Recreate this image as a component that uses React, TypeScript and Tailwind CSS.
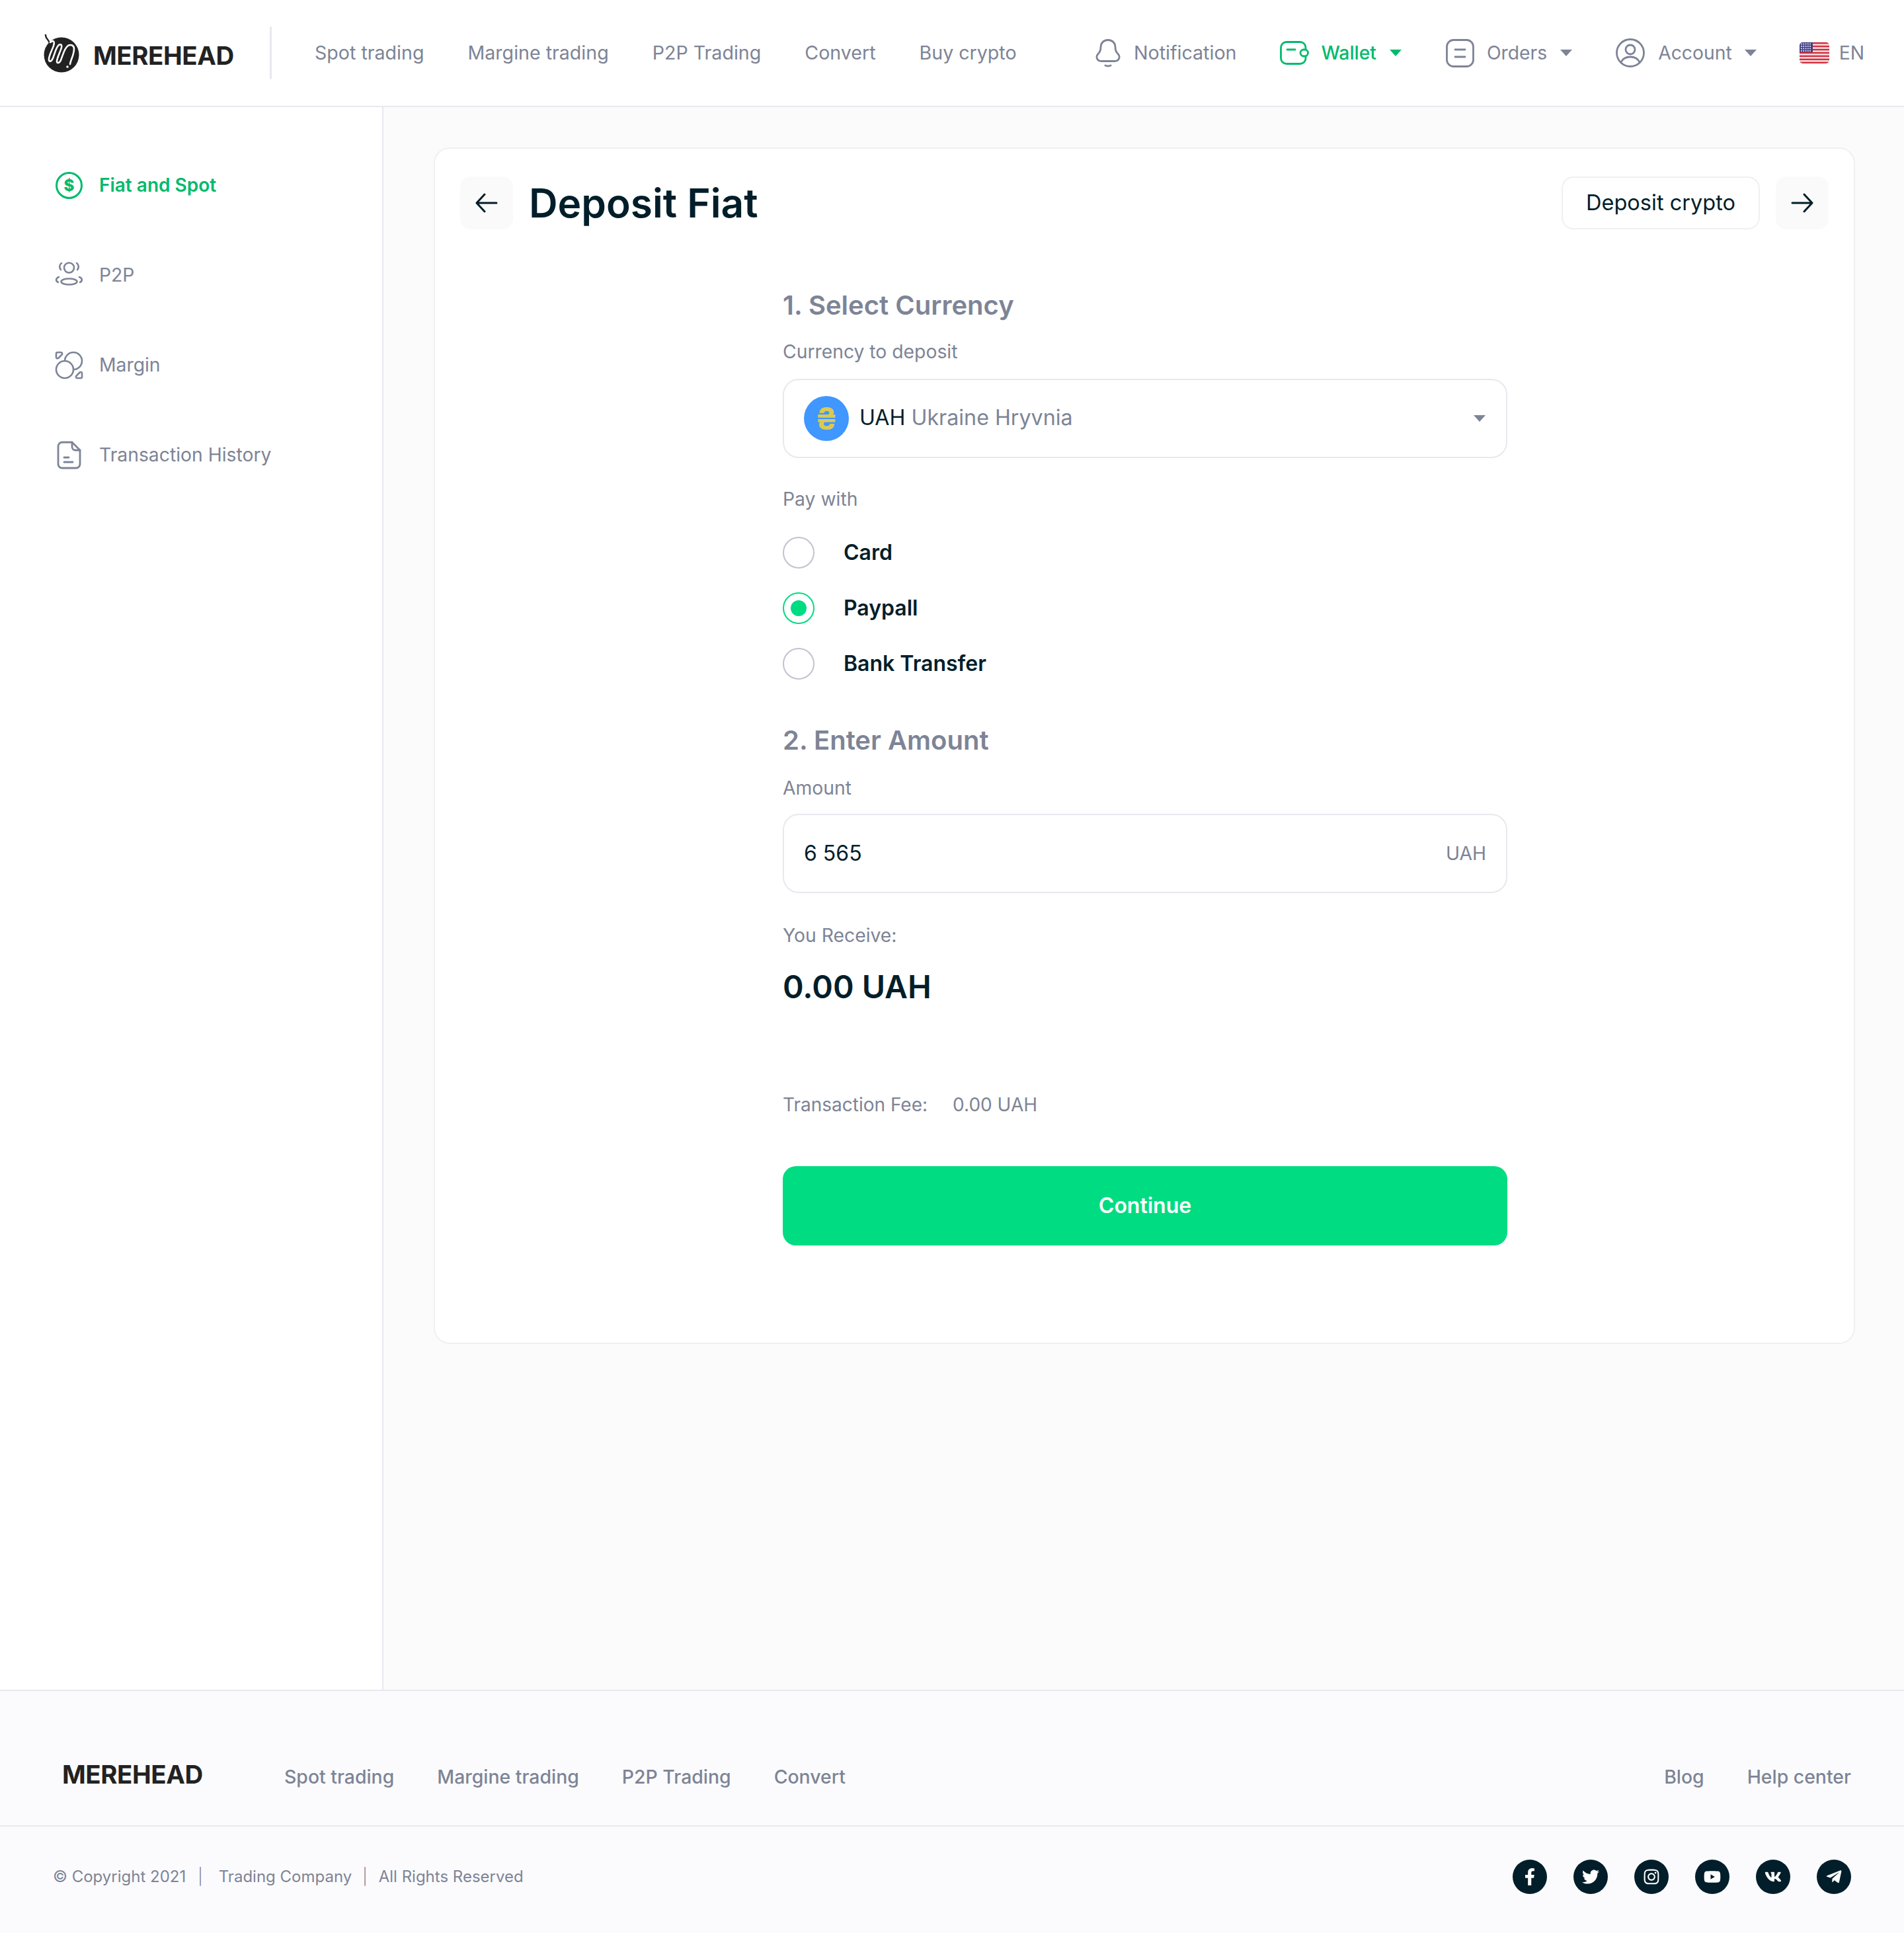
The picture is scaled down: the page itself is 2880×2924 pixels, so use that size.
import { FaFacebookF, FaTwitter, FaInstagram, FaYoutube, FaVk, FaTelegramPlane } from "react-icons/fa";

const topLinks = ["Spot trading", "Margine trading", "P2P Trading", "Convert", "Buy crypto"];
const footerLinks = ["Spot trading", "Margine trading", "P2P Trading", "Convert"];
const socials = [FaFacebookF, FaTwitter, FaInstagram, FaYoutube, FaVk, FaTelegramPlane];
const flagStripes = [0, 2, 4, 6, 8, 10, 12];

function Caret({ className }: { className: string }) {
  return (
    <svg width="20" height="12" viewBox="0 0 20 12" className={className}>
      <path d="M1 1h18L10 11z" fill="currentColor" />
    </svg>
  );
}

function Logo() {
  return (
    <svg width="54" height="58" viewBox="0 0 54 58" fill="none">
      <circle cx="27" cy="31" r="26.500" fill="#222" />
      <path d="M3 0c-1 6 5 8 6 13" stroke="#222" strokeWidth="2.4" strokeLinecap="round" />
      <path
        d="M10 12c5-4 7-1 5 5-2 7-8 16-7 22 1 3 4 2 6-3 3-7 4-14 8-19 3-3 6-2 5 3-2 7-7 16-7 21 0 3 4 3 6-2 3-7 5-18 11-22 4-2 9-1 9 5 0 9-5 16-6 23"
        stroke="#fff"
        strokeWidth="2.6"
        strokeLinecap="round"
        strokeLinejoin="round"
      />
      <circle cx="36" cy="49" r="1.800" fill="#fff" />
    </svg>
  );
}

function Flag() {
  return (
    <svg width="45" height="32" viewBox="0 0 45 32" className="rounded-[5px]">
      <rect width="45" height="32" fill="#f7e4e6" />
      {flagStripes.map((n) => (
        <rect key={n} y={(n * 32) / 13} width="45" height="2.460" fill="#d22f3f" />
      ))}
      <rect width="20" height="15" fill="#3f3f86" />
      <path d="M2 2.500h16M2 6h16M2 9.500h16M2 13h16" stroke="#dcdcf0" strokeWidth="1.800" strokeDasharray="1.800 1.500" />
    </svg>
  );
}

export default function App() {
  return (
    <div className="flex min-h-[2924px] w-[2880px] flex-col bg-white font-['Inter',sans-serif] text-[#7d8496]">
      <header className="flex h-[162px] items-center border-b-2 border-[#e8e8ee] pl-[66px] pr-[60px] text-[28.3px]">
        <div className="flex w-[342px] shrink-0 items-center gap-[21px]">
          <div className="mt-[1px] flex">
            <Logo />
          </div>
          <span className="mt-[8px] text-[38.4px] font-bold leading-none tracking-[-0.4px] text-[#222]">MEREHEAD</span>
        </div>
        <div className="h-[80px] w-[3px] rounded bg-[#e8e8ee]" />
        <nav className="ml-[65px] flex gap-[66px] text-[28.6px]">
          {topLinks.map((l) => (
            <span key={l}>{l}</span>
          ))}
        </nav>
        <div className="ml-auto flex items-center">
          <svg width="38" height="43" viewBox="0 0 38 43" fill="none" stroke="currentColor" strokeWidth="2.800" strokeLinecap="round">
            <path d="M19 1.500c-7 0-11 5-11 11 0 4-1 7-4 10-4 4-2 11 5 11h20c7 0 9-7 5-11-3-3-4-6-4-10 0-6-4-11-11-11z" />
            <path d="M15 40c3 1.500 5 1.500 8 0" />
          </svg>
          <span className="ml-[20px] text-[28.6px]">Notification</span>
          <div className="ml-[66px] flex items-center text-[#00ba6c]">
            <svg width="44" height="36" viewBox="0 0 44 36" fill="none" stroke="currentColor" strokeWidth="2.800" strokeLinecap="round">
              <path d="M39 12V10a8.500 8.500 0 0 0-8.500-8.500H10A8.500 8.500 0 0 0 1.500 10v16a8.500 8.500 0 0 0 8.500 8.500h20.500A8.500 8.500 0 0 0 39 26v-2" />
              <path d="M11 13h12" />
              <rect x="31" y="13" width="11.500" height="10" rx="5" />
            </svg>
            <span className="ml-[18px] font-medium">Wallet</span>
            <Caret className="ml-[19px]" />
          </div>
          <svg className="ml-[66px]" width="43" height="43" viewBox="0 0 43 43" fill="none" stroke="currentColor" strokeWidth="2.800" strokeLinecap="round">
            <rect x="1.500" y="1.500" width="40" height="40" rx="10" />
            <path d="M14 16h15M14 27h15" />
          </svg>
          <span className="ml-[19px]">Orders</span>
          <Caret className="ml-[19px]" />
          <svg className="ml-[65px]" width="44" height="44" viewBox="0 0 44 44" fill="none" stroke="currentColor" strokeWidth="2.800">
            <circle cx="22" cy="22" r="20.500" />
            <circle cx="22" cy="17" r="7" />
            <path d="M8 36c3-6 8-8 14-8s11 2 14 8" />
          </svg>
          <span className="ml-[20px]">Account</span>
          <Caret className="ml-[18px]" />
          <div className="ml-[64px] flex">
            <Flag />
          </div>
          <span className="ml-[15px]">EN</span>
        </div>
      </header>

      <div className="flex flex-1">
        <aside className="flex w-[580px] shrink-0 flex-col gap-[92px] border-r-2 border-[#e8e8ee] pl-[83px] pt-[96px] text-[28.3px]">
          <div className="flex h-[44px] items-center gap-[24px] text-[28px] font-semibold text-[#00ba6c]">
            <svg width="43" height="43" viewBox="0 0 43 43" fill="none">
              <circle cx="21.500" cy="21.500" r="19" stroke="currentColor" strokeWidth="3" />
              <text x="21.500" y="30" textAnchor="middle" fontSize="24" fontWeight="800" fill="currentColor">$</text>
            </svg>
            <span>Fiat and Spot</span>
          </div>
          <div className="flex h-[44px] items-center gap-[24px]">
            <svg width="43" height="43" viewBox="0 0 43 43" fill="none" stroke="currentColor" strokeWidth="2.600" strokeLinecap="round">
              <circle cx="21.500" cy="10" r="7.500" />
              <ellipse cx="21.500" cy="31" rx="12" ry="4.500" />
              <path d="M10 3c-3 2-4 7-1 10M33 3c3 2 4 7 1 10M6 24c-5 2-5 6-1 8M37 24c5 2 5 6 1 8" />
            </svg>
            <span>P2P</span>
          </div>
          <div className="flex h-[44px] items-center gap-[24px]">
            <svg width="43" height="43" viewBox="0 0 43 43" fill="none" stroke="currentColor" strokeWidth="2.600" strokeLinejoin="round">
              <circle cx="28" cy="15" r="13" />
              <circle cx="15" cy="28" r="13" fill="#fff" />
              <path d="M2 4a2 2 0 0 1 2-2h5a2 2 0 0 1 1.500 3.500L5 11a2 2 0 0 1-3-1.500zM41 39a2 2 0 0 1-2 2h-5a2 2 0 0 1-1.500-3.500L38 32a2 2 0 0 1 3 1.500z" />
            </svg>
            <span>Margin</span>
          </div>
          <div className="flex h-[44px] items-center gap-[24px]">
            <svg width="43" height="43" viewBox="0 0 43 43" fill="none" stroke="currentColor" strokeWidth="2.800" strokeLinecap="round" strokeLinejoin="round">
              <path d="M26 2H11a6 6 0 0 0-6 6v27a6 6 0 0 0 6 6h21a6 6 0 0 0 6-6V14z" />
              <path d="M26 2v7a5 5 0 0 0 5 5h7M14 25h7M14 32h13" />
            </svg>
            <span>Transaction History</span>
          </div>
        </aside>

        <main className="flex-1 bg-[#fbfbfb] pl-[76px] pr-[74px] pt-[61px]">
          <section className="h-[1810px] rounded-[24px] border-2 border-[#f0f0f2] bg-white">
            <div className="flex items-center justify-between pl-[38px] pr-[38px] pt-[42px]">
              <div className="flex items-center gap-[24px]">
                <div className="flex h-[80px] w-[80px] items-center justify-center rounded-[16px] bg-[#fafafa]">
                  <svg width="36" height="30" viewBox="0 0 36 30" fill="none" stroke="#021e2a" strokeWidth="3" strokeLinecap="round" strokeLinejoin="round">
                    <path d="M33 15H3M15 2 3 15l12 13" />
                  </svg>
                </div>
                <h1 className="text-[60.4px] font-semibold leading-none text-[#021e2a]">Deposit Fiat</h1>
              </div>
              <div className="flex items-center gap-[24px]">
                <div className="flex h-[80px] w-[300px] items-center justify-center rounded-[18px] border-2 border-[#f0f0f2] text-[32.5px] text-[#021e2a]">
                  Deposit crypto
                </div>
                <div className="flex h-[80px] w-[80px] items-center justify-center rounded-[16px] bg-[#fafafa]">
                  <svg width="36" height="30" viewBox="0 0 36 30" fill="none" stroke="#021e2a" strokeWidth="3" strokeLinecap="round" strokeLinejoin="round">
                    <path d="M3 15h30M21 2l12 13-12 13" />
                  </svg>
                </div>
              </div>
            </div>

            <div className="ml-[526px] mt-[91px] w-[1096px]">
              <h2 className="text-[40px] font-semibold leading-[48px] text-[#7d8496]">1. Select Currency</h2>
              <div className="mt-[28px] text-[28.3px] leading-[36px]">Currency to deposit</div>
              <div className="mt-[23px] flex h-[120px] items-center rounded-[24px] border-2 border-[#e8e8ee] pl-[30px] pr-[30px]">
                <div className="flex h-[68px] w-[68px] items-center justify-center rounded-full bg-[#3f97ff] text-[46px] font-bold leading-none text-[#d9c956]">₴</div>
                <div className="ml-[16px] mt-[-2px] text-[32.2px]">
                  <span className="text-[#021e2a]">UAH</span> Ukraine Hryvnia
                </div>
                <Caret className="ml-auto" />
              </div>

              <div className="mt-[44px] text-[28.3px] leading-[36px]">Pay with</div>
              <div className="mt-[39px] flex flex-col gap-[36px]">
                {["Card", "Paypall", "Bank Transfer"].map((o, i) => (
                  <div key={o} className="flex h-[48px] items-center gap-[44px]">
                    {i === 1 ? (
                      <div className="flex h-[48px] w-[48px] items-center justify-center rounded-full border-2 border-[#00dc82]">
                        <div className="h-[24px] w-[24px] rounded-full bg-[#00dc82]" />
                      </div>
                    ) : (
                      <div className="h-[48px] w-[48px] rounded-full border-2 border-[#c0c3ce]" />
                    )}
                    <span className="text-[32px] font-semibold text-[#021e2a]">{o}</span>
                  </div>
                ))}
              </div>

              <h2 className="mt-[68px] text-[40px] font-semibold leading-[48px] text-[#7d8496]">2. Enter Amount</h2>
              <div className="mt-[30px] text-[28.3px] leading-[36px]">Amount</div>
              <div className="mt-[21px] flex h-[120px] items-center justify-between rounded-[24px] border-2 border-[#e8e8ee] px-[30px]">
                <span className="text-[32px] text-[#021e2a]">6 565</span>
                <span className="text-[28.3px]">UAH</span>
              </div>

              <div className="mt-[46px] text-[28.3px] leading-[36px]">You Receive:</div>
              <div className="mt-[30px] text-[48px] font-semibold leading-[60px] text-[#021e2a]">0.00 UAH</div>

              <div className="mt-[130px] flex gap-[38px] text-[28px] leading-[36px]">
                <span>Transaction Fee:</span>
                <span>0.00 UAH</span>
              </div>

              <div className="mt-[75px] flex h-[120px] items-center justify-center rounded-[20px] bg-[#00dc82] text-[32px] font-semibold text-white">
                Continue
              </div>
            </div>
          </section>
        </main>
      </div>

      <footer className="border-t-2 border-[#e8e8ee] bg-[#fbfbfd]">
        <div className="flex h-[205px] items-center border-b-2 border-[#e8e8ee] pl-[94px] pr-[80px] pt-[57px] text-[28.4px] font-medium">
          <span className="mt-[-8px] w-[336px] text-[38.4px] font-bold leading-none tracking-[-0.4px] text-[#222]">MEREHEAD</span>
          <div className="flex gap-[65px]">
            {footerLinks.map((l) => (
              <span key={l}>{l}</span>
            ))}
          </div>
          <div className="ml-auto flex gap-[65px]">
            <span>Blog</span>
            <span>Help center</span>
          </div>
        </div>
        <div className="flex h-[161px] items-center pb-[9px] pl-[80px] pr-[80px] text-[24px]">
          <span>© Copyright 2021</span>
          <span className="ml-[18px] font-light">|</span>
          <span className="ml-[24px]">Trading Company</span>
          <span className="ml-[16px] font-light">|</span>
          <span className="ml-[17px]">All Rights Reserved</span>
          <div className="ml-auto flex gap-[40px]">
            {socials.map((Icon, i) => (
              <div key={i} className="flex h-[52px] w-[52px] items-center justify-center rounded-full bg-[#021e2a] text-[26px] text-white">
                <Icon />
              </div>
            ))}
          </div>
        </div>
      </footer>
    </div>
  );
}
